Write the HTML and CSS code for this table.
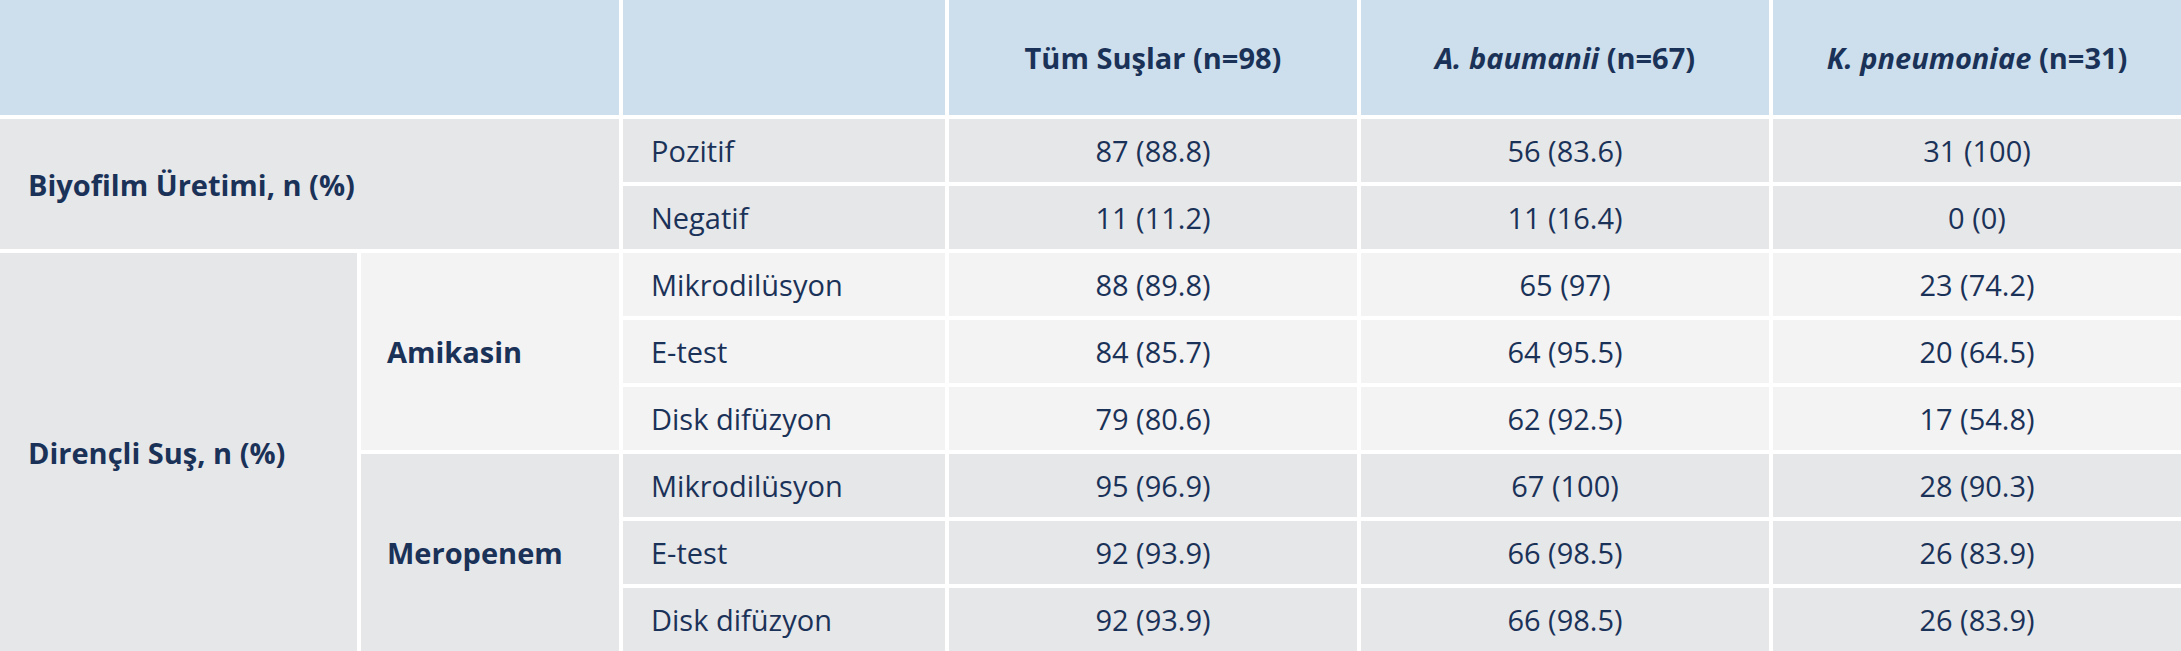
FILE: index.html
```html
<!DOCTYPE html>
<html lang="tr">
<head>
  <meta charset="UTF-8">
  <title>Biyofilm ve Direnç Tablosu</title>
  <link rel="stylesheet" href="styles.css">
</head>
<body>

  <div class="grid">
    <div class="cell head span-2"></div>
    <div class="cell head"></div>
    <div class="cell head center bold">Tüm Suşlar (n=98)</div>
    <div class="cell head center bold"><i>A. baumanii</i>&nbsp;(n=67)</div>
    <div class="cell head center bold"><i>K. pneumoniae</i>&nbsp;(n=31)</div>

    <!-- biyofilm -->
    <div class="cell gray bold group span-2 rows-2">Biyofilm Üretimi, n (%)</div>
    <div class="cell gray method">Pozitif</div>
    <div class="cell gray center">87 (88.8)</div>
    <div class="cell gray center">56 (83.6)</div>
    <div class="cell gray center">31 (100)</div>

    <div class="cell gray method">Negatif</div>
    <div class="cell gray center">11 (11.2)</div>
    <div class="cell gray center">11 (16.4)</div>
    <div class="cell gray center">0 (0)</div>

    <!-- direnç -->
    <div class="cell gray bold group rows-6">Dirençli Suş, n (%)</div>
    <div class="cell light bold drug rows-3">Amikasin</div>
    <div class="cell light method">Mikrodilüsyon</div>
    <div class="cell light center">88 (89.8)</div>
    <div class="cell light center">65 (97)</div>
    <div class="cell light center">23 (74.2)</div>

    <div class="cell light method">E-test</div>
    <div class="cell light center">84 (85.7)</div>
    <div class="cell light center">64 (95.5)</div>
    <div class="cell light center">20 (64.5)</div>

    <div class="cell light method">Disk difüzyon</div>
    <div class="cell light center">79 (80.6)</div>
    <div class="cell light center">62 (92.5)</div>
    <div class="cell light center">17 (54.8)</div>

    <div class="cell gray bold drug rows-3">Meropenem</div>
    <div class="cell gray method">Mikrodilüsyon</div>
    <div class="cell gray center">95 (96.9)</div>
    <div class="cell gray center">67 (100)</div>
    <div class="cell gray center">28 (90.3)</div>

    <div class="cell gray method">E-test</div>
    <div class="cell gray center">92 (93.9)</div>
    <div class="cell gray center">66 (98.5)</div>
    <div class="cell gray center">26 (83.9)</div>

    <div class="cell gray method">Disk difüzyon</div>
    <div class="cell gray center">92 (93.9)</div>
    <div class="cell gray center">66 (98.5)</div>
    <div class="cell gray center">26 (83.9)</div>
  </div>

</body>
</html>
```

FILE: styles.css
```css
body {
  margin: 0;
  background: #fff;
  color: #1b3258;
  font-family: 'Open Sans', 'Noto Sans', sans-serif;
  font-size: 29px;
}

.grid {
  display: grid;
  grid-template-columns: 357px 258px 322px 408px 408px 408px;
  grid-template-rows: 115px repeat(8, 63px);
  gap: 4px;
  background: #fff;
}

.cell {
  display: flex;
  align-items: center;
}

.head {
  background: #cddfec;
}

.gray {
  background: #e6e7e9;
}

.light {
  background: #f3f3f3;
}

.center {
  justify-content: center;
}

.bold {
  font-weight: bold;
}

.head i {
  font-style: italic;
}

.method {
  padding-left: 28px;
}

.group {
  padding-left: 28px;
}

.drug {
  padding-left: 26px;
}

.span-2 {
  grid-column: span 2;
}

.rows-2 {
  grid-row: span 2;
}

.rows-3 {
  grid-row: span 3;
}

.rows-6 {
  grid-row: span 6;
}
```
